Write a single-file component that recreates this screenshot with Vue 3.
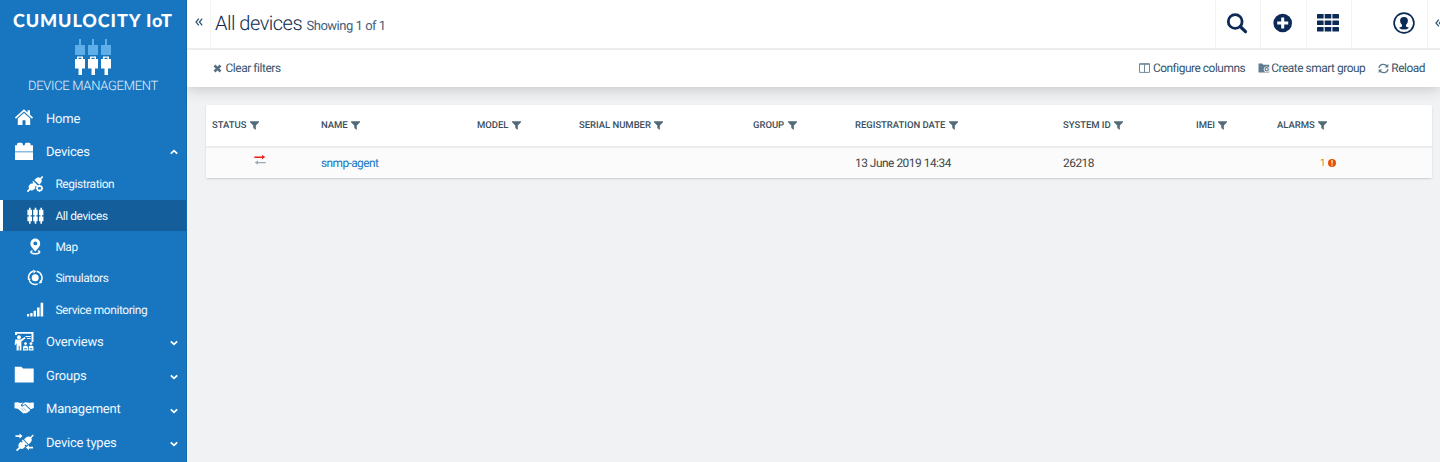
<script setup>
const nav = [
  { label: 'Home', icon: 'home' },
  { label: 'Devices', icon: 'devices', arrow: 'up' },
  { label: 'Registration', icon: 'registration', sub: true },
  { label: 'All devices', icon: 'all', sub: true, active: true },
  { label: 'Map', icon: 'map', sub: true },
  { label: 'Simulators', icon: 'simulators', sub: true },
  { label: 'Service monitoring', icon: 'signal', sub: true },
  { label: 'Overviews', icon: 'overviews', arrow: 'down' },
  { label: 'Groups', icon: 'groups', arrow: 'down' },
  { label: 'Management', icon: 'management', arrow: 'down' },
  { label: 'Device types', icon: 'types', arrow: 'down' }
]

const icons = {
  home: '<path d="M10 1.200.9 9.600l1.100 1.200L10 3.500l8 7.300 1.100-1.200-3.100-2.900V2.200h-2.500v2.300z"/><path d="M10 4.900 3.800 10.500v6.500h4.700v-4.800h3v4.800h4.700v-6.500z"/>',
  devices: '<path d="M3 2.200q0-1.500 1.500-1.500h2.800q1.500 0 1.500 1.500v1H3zM10.800 2.200q0-1.500 1.500-1.500h2.800q1.500 0 1.500 1.500v1h-5.800zM1 3.200h18v6.400H1zM1 10.200h18V18H1z"/>',
  registration: '<path d="m8.300 5 2-1.800q2-1.700 3.800-.2l2-2.100 1.200 1.200-2 2.100q1.300 1.900-.4 3.700l-1.800 1.700zM7.300 6l4.800 4.800-1.200 1.200-1-1-1.100 1.100.8.800-1.600 1.600q-2 1.600-3.700.4L2 17.200.8 16l2.200-2.300q-1.200-1.900.4-3.700L5.200 8.200l.8.800 1.200-1.200-1-1z"/><circle cx="13.500" cy="13.300" r="2.400" fill="none" stroke="#fff" stroke-width="1.700"/><path d="M13 9.700h1v7.200h-1zM9.900 12.800h7.200v1H9.900z"/><circle cx="13.500" cy="13.300" r="1.300" fill="#1776bf"/>',
  all: '<path d="M3 .8h1.600v2H6v5.400H1.400V2.800H3zM8.700.8h1.600v2h1.400v5.400H7.200V2.800h1.500zM14.400.8H16v2h1.400v5.400H13V2.800h1.400zM1.400 9.600H6v4.600H4.600v2.600H3v-2.600H1.400zM7.200 9.600h4.500v4.600h-1.400v2.600H8.700v-2.600H7.200zM13 9.600h4.400v4.600H16v2.600h-1.600v-2.600H13zM3 8h1.600v2H3zM8.700 8h1.600v2H8.700zM14.400 8H16v2h-1.600z"/>',
  map: '<path fill-rule="evenodd" d="M9.300.6a4.900 4.900 0 0 0-4.900 4.900c0 3.800 3.500 5.600 4.900 8.300 1.400-2.700 4.900-4.500 4.900-8.300A4.900 4.900 0 0 0 9.300.6zm0 2.900a1.900 1.900 0 1 1 0 3.800 1.900 1.900 0 0 1 0-3.800z"/><path d="M6.500 12.800q-2 .7-1.500 1.600c1 1.800 7.600 1.800 8.600 0q.5-.9-1.500-1.600" fill="none" stroke="#fff" stroke-width="1.500"/>',
  simulators: '<circle cx="9.200" cy="8.800" r="3.500"/><path d="M7 2.300a6.700 6.700 0 0 0-4.300 8M3.400 12.200a6.700 6.700 0 0 0 8.300 2.700M14.200 13.300A6.700 6.700 0 0 0 10.700 2.200" fill="none" stroke="#fff" stroke-width="1.500"/><path d="m7 .6 3.200 1.600-2.500 2.400zM1.600 9.900l3-.3-.8 3zM14.600 10.900l1.500 3.200-3.600.4z"/>',
  signal: '<path d="M1 12.900h2.200v2.500H1zM4.200 12h2.400v3.400H4.200zM7.600 9.700H10v5.700H7.600zM11 6.600h2.600v8.800H11zM14.600 1.800h2.600v13.600h-2.600z"/>',
  overviews: '<path d="M1 0h18.500v10h-2V1.700H3V3H1z"/><circle cx="5" cy="5.300" r="2"/><path d="M1.300 7.500h5.500l4-2.400.8 1.200-4.200 3.300v8.900H5.600v-4.800h-.9v4.800H2.600V11L1.800 13 .6 12.400zM11.500 3.900h5.200v1h-5.200zM13 5.900h3.700v1H13z"/><circle cx="11.500" cy="11.600" r="1.400"/><circle cx="17" cy="11.600" r="1.400"/><path d="M9 18.500v-2.800q0-2 1.300-2h2.300q1.300 0 1.300 2v2.800zM14.700 18.500v-2.800q0-2 1.200-2h2.300q1.300 0 1.300 2v2.800z"/><path d="M10.200 16.300h2.600v1h-2.600zM15.800 16.300h2.500v1h-2.500z" fill="#1776bf"/>',
  groups: '<path d="M.8.700h6.600L9 2.500h10.700v14H.8z"/>',
  management: '<path d="M.5 3.600 3.800 3.300l2.400.7 3.200-.6L7 5.700q-.6 1.800 1.500 1.900L11 6.100l5.200 5-.8 1.200-.9.100-.5 1h-1.200l-.8 1-1.300-.4-1.200.5-5.700-4.800H3.700L.5 9.200z"/><path d="M9.800 3.900 11.500 3.300l4 .5 4.300-.2v5.400L16.800 10.200 11.300 4.900 8.800 6.600l-.8-.5z"/><path d="m7 9.300 2.600 2.700M9 8.600l3.200 3.300" fill="none" stroke="#1776bf" stroke-width=".5"/>',
  types: '<path d="m10 6.400 2.300-2.200q2-1.500 4-.1L18.800 1.400l1 1-2.500 2.600q1.300 2-.3 3.900l-2.300 2.300zM8.700 6.500l5 5-1 1-1-1-1.100 1.100.9.900-1.600 1.600q-2 1.500-3.900.4L3.200 18.300 2 17l2.800-2.800q-1.200-2 .3-3.900L6.700 8.700l.9.900L8.700 8.500l-1-1z"/><path d="M1.500 2.200h4V.4l3 2.600-3 2.700V3.900h-4zM19 13.700v1.700h-4v1.900l-3.200-2.700 3.200-2.700v1.800z"/>'
}

const columns = [
  { title: 'STATUS', type: 'status' },
  { title: 'NAME', value: 'snmp-agent', type: 'link' },
  { title: 'MODEL' },
  { title: 'SERIAL NUMBER' },
  { title: 'GROUP' },
  { title: 'REGISTRATION DATE', value: '13 June 2019 14:34' },
  { title: 'SYSTEM ID', value: '26218' },
  { title: 'IMEI' },
  { title: 'ALARMS', value: '1', type: 'alarm' }
]
</script>

<template>
  <div class="shell">
    <aside class="sidebar">
      <div class="brand">CUMULOCITY IoT</div>
      <svg class="app-icon" width="38" height="37" viewBox="0 0 38 37">
        <g v-for="x in [0, 13, 26]" :key="x" :transform="`translate(${x} 0)`">
          <path d="M4 0h2v6h4v10H0V6h4z" fill="#5eaeea" />
          <path fill-rule="evenodd" d="M2 17.500h6V20h2v9.500H7V36H3.500v-6.500H0V20h2zM3.500 18.800V20h3v-1.200z" fill="#fff" />
        </g>
      </svg>
      <div class="app-name">DEVICE MANAGEMENT</div>
      <nav>
        <a v-for="n in nav" :key="n.label" class="item" :class="{ sub: n.sub, active: n.active }">
          <svg
            class="nav-icon"
            :width="n.sub ? 18 : 20"
            :height="n.sub ? 18 : 20"
            :viewBox="n.sub ? '0 0 18 18' : '0 0 20 20'"
            fill="#fff"
            v-html="icons[n.icon]"
          />
          <span class="label">{{ n.label }}</span>
          <svg v-if="n.arrow" class="arrow" :class="n.arrow" width="8" height="6" viewBox="0 0 8 6">
            <path d="m.8 1.300 3.200 3 3.200-3" fill="none" stroke="#fff" stroke-width="1.800" />
          </svg>
        </a>
      </nav>
    </aside>

    <main>
      <header class="topbar">
        <div class="collapse">
          <svg width="8" height="8" viewBox="0 0 8 8"><path d="M3.800.7 1 4l2.800 3.300M7.200.7 4.400 4l2.800 3.300" /></svg>
        </div>
        <h1>All devices <small>Showing 1 of 1</small></h1>
        <div class="tool">
          <svg width="22" height="22" viewBox="0 0 22 22" fill="none" stroke="#0b2a55">
            <circle cx="9.200" cy="9.500" r="6.900" stroke-width="2.800" />
            <path d="m14.200 14.500 5.300 5.200" stroke-width="3.200" stroke-linecap="round" />
          </svg>
        </div>
        <div class="tool">
          <svg width="20" height="20" viewBox="0 0 20 20">
            <circle cx="9.700" cy="10" r="9.300" fill="#0b2a55" />
            <path d="M8.200 4.500h3v4h4v3h-4v4h-3v-4h-4v-3h4z" fill="#fff" />
          </svg>
        </div>
        <div class="tool">
          <svg width="22" height="18" viewBox="0 0 22 18" fill="#0b2a55">
            <template v-for="y in [0, 6.5, 13]" :key="y">
              <rect v-for="x in [0, 7.7, 15.4]" :key="x" :x="x" :y="y" width="6.600" height="4.600" rx=".5" />
            </template>
          </svg>
        </div>
        <div class="tool user">
          <svg width="22" height="22" viewBox="0 0 22 22">
            <circle cx="11" cy="11" r="9.900" fill="none" stroke="#0b2a55" stroke-width="1.700" />
            <path d="M11 4.900c-2.700 0-4 1.500-3.900 3.900.1 1.700.8 3 1.900 3.900v1.700l-3 1.300q1.900 1.900 5 1.900t5-1.900l-3-1.300v-1.700c1.100-.9 1.800-2.200 1.900-3.900.1-2.400-1.200-3.900-3.900-3.900z" fill="#0b2a55" />
          </svg>
        </div>
        <div class="drawer">
          <svg width="8" height="8" viewBox="0 0 8 8"><path d="M3.800.7 1 4l2.800 3.300M7.200.7 4.400 4l2.800 3.300" /></svg>
        </div>
      </header>

      <div class="actions">
        <a class="clear">
          <svg width="9" height="9" viewBox="0 0 9 9"><path d="m1.500 1.500 6 6m0-6-6 6" stroke="#567083" stroke-width="2.500" /></svg>
          Clear filters
        </a>
        <a>
          <svg width="11" height="10" viewBox="0 0 11 10" fill="none" stroke="#728b9c"><path d="M.5.900h10v8.500H.5zM5.500 1v8.500" /><path d="M.5 1h10" stroke-width="1.500" /></svg>
          Configure columns
        </a>
        <a class="group">
          <svg width="12" height="10" viewBox="0 0 12 10">
            <path d="M.5.500h3.700l1 1.300h6v7.700H.5z" fill="#607d92" />
            <circle cx="8.700" cy="6.300" r="2.900" fill="#fff" />
            <circle cx="8.700" cy="6.300" r="1.600" fill="none" stroke="#607d92" stroke-width="1.200" />
          </svg>
          Create smart group
        </a>
        <a>
          <svg width="11" height="11" viewBox="0 0 11 11" fill="none" stroke="#607d92" stroke-width="1.300">
            <path d="M1 4.800C1.500 1 7 .1 9.300 3.400M10 6.200C9.500 10 4 10.900 1.700 7.600" />
            <path d="M10.300.8v3.800H6.800zM.7 10.200V6.400h3.500z" fill="#607d92" stroke="none" />
          </svg>
          Reload
        </a>
      </div>

      <section class="content">
        <div class="table">
          <div class="row head">
            <div v-for="c in columns" :key="c.title" class="cell">
              {{ c.title }}
              <svg width="9" height="9" viewBox="0 0 9 9"><path d="M0 .2h9v1L5.800 4.500V9L3.300 7V4.500L0 1.200z" fill="#526a78" /></svg>
            </div>
          </div>
          <div class="row body">
            <div v-for="c in columns" :key="c.title" class="cell" :class="c.type">
              <svg v-if="c.type === 'status'" width="12" height="10" viewBox="0 0 12 10">
                <path d="M.3 1.400h7.700V0L11.300 2.100 8 4.200V2.900H.3z" fill="#ed211b" />
                <path d="M11.700 7H4V5.500L.7 7.600 4 9.700V8.300h7.700z" fill="#9baab2" />
              </svg>
              <span v-else>{{ c.value }}</span>
              <svg v-if="c.type === 'alarm'" width="8" height="8" viewBox="0 0 8 8">
                <circle cx="4" cy="4" r="4" fill="#e65100" />
                <path d="M3.300 1.200h1.400l-.2 3.500h-1zM3.400 5.500h1.200v1.200H3.400z" fill="#fff" />
              </svg>
            </div>
          </div>
        </div>
      </section>
    </main>
  </div>
</template>

<style>
body { overflow: hidden; }
</style>

<style scoped>
* { box-sizing: border-box; }
svg { display: block; flex: none; }
.shell { display: flex; width: 1440px; height: 462px; overflow: hidden; font-family: Roboto, sans-serif; background: #f0f2f4; text-rendering: geometricPrecision; }
.sidebar { position: relative; z-index: 2; flex: none; width: 187px; height: 462px; background: #1776bf; border-right: 1px solid #1467a9; color: #fff; }
.brand { height: 39px; padding-left: 13px; font: 900 18px/40px Lato, sans-serif; letter-spacing: .9px; white-space: nowrap; }
.app-icon { margin-left: 75px; }
.app-name { height: 25.500px; padding-left: 28px; font-size: 13px; line-height: 21px; font-weight: 300; letter-spacing: -.3px; color: #e5f2ff; white-space: nowrap; }
.item { display: flex; align-items: center; height: 33.600px; padding: 0 8px 0 14px; color: #f1f8ff; font-size: 13px; letter-spacing: -.2px; }
.nav-icon { margin-right: 12px; }
.label { flex: 1; padding-top: 1.500px; white-space: nowrap; }
.sub { height: 31.300px; padding-left: 26px; font-size: 11.900px; letter-spacing: -.4px; }
.sub .label { padding-top: 0; }
.sub .nav-icon { margin-right: 11.400px; }
.active { background: #145f9b; border-left: 3px solid #fff; padding-left: 23px; }
.arrow.up { transform: rotate(180deg); }
.arrow.down { margin-top: 3px; }
main { flex: 1; min-width: 0; display: flex; flex-direction: column; }
.topbar { position: relative; z-index: 1; display: flex; height: 50px; background: #fff; border-bottom: 2px solid #ececec; }
.collapse { width: 24px; padding: 18px 0 0 8px; border-right: 1px solid #f3f3f3; }
.collapse path, .drawer path { fill: none; stroke: #28506f; stroke-width: 1.200; }
h1 { flex: 1; margin: 0 0 0 4px; font-size: 20px; line-height: 46px; font-weight: 300; letter-spacing: -.5px; color: #0b2a4e; white-space: nowrap; }
small { font-size: 13px; font-weight: 400; letter-spacing: -.48px; color: #42607b; }
.tool { width: 45.300px; border-left: 1px solid #f3f3f3; display: flex; align-items: center; justify-content: center; padding: 0 2px 2px 0; }
.user { width: 76px; padding-left: 29px; padding-right: 0; }
.drawer { width: 13px; border-left: 1px solid #f3f3f3; padding: 19px 0 0 7px; overflow: hidden; }
.actions { position: relative; display: flex; align-items: center; gap: 12.500px; height: 37px; padding: 0 15px 1px 26px; background: #fff; color: #36536b; font-size: 11.900px; letter-spacing: -.46px; box-shadow: 0 1px 15px rgba(0, 0, 0, .22); }
.actions a { display: flex; align-items: center; gap: 2.500px; white-space: nowrap; }
.actions .group { gap: 1.500px; }
.actions .clear { margin-right: auto; gap: 3.500px; letter-spacing: -.42px; }
.content { flex: 1; padding: 18px 8px 0 19px; }
.table { width: 1226px; background: #fff; border-radius: 2px; box-shadow: 0 1px 2px rgba(0, 0, 0, .16); }
.row { display: grid; grid-template-columns: 109px 156px 102px 174px 102px 208px 133px 81px 161px; }
.cell { display: flex; align-items: center; padding-left: 6px; white-space: nowrap; }
.head { height: 43px; padding-bottom: 1px; border-bottom: 2px solid #ececec; color: #3b4e5c; font-size: 9.500px; font-weight: 500; letter-spacing: -.03px; }
.head svg { margin: 1px 0 0 3.500px; }
.body { height: 30px; padding-bottom: 1px; background: #fbfbfb; color: #444; font-size: 11.900px; letter-spacing: -.48px; }
.body .status { padding: 0 0 5px 48px; }
.body .link { color: #1776bf; letter-spacing: -.58px; }
.body .alarm { padding-left: 49px; gap: 3px; color: #e68332; font-size: 10px; }
.body .alarm span { padding-top: 1px; }
</style>
